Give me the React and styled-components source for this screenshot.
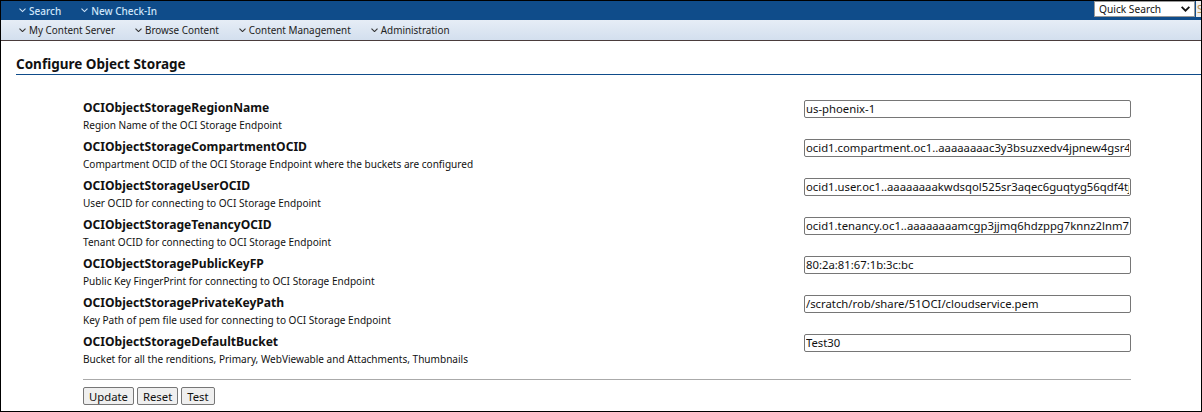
import styled, { createGlobalStyle } from "styled-components";

const GlobalStyle = createGlobalStyle`
  html, body {
    margin: 0;
    padding: 0;
    background: #fff;
  }
`;

const Page = styled.div`
  width: 1202px;
  height: 412px;
  box-sizing: border-box;
  border: 1px solid #000;
  overflow: hidden;
  font-family: "Noto Sans", "Liberation Sans", sans-serif;
  color: #111;
`;

const TopBar = styled.div`
  height: 19px;
  background: #0f4c8a;
  display: flex;
  align-items: center;
  padding-left: 18px;
  gap: 20px;
`;

const TopLink = styled.a`
  display: flex;
  align-items: center;
  gap: 3px;
  color: #cfe6fa;
  font-size: 10px;
  font-weight: 500;
`;

const QuickArea = styled.div`
  margin-left: auto;
  display: flex;
  height: 16px;
  align-self: flex-start;
  gap: 1px;
`;

const QuickSelect = styled.div`
  width: 101px;
  box-sizing: border-box;
  border: 1px solid #999;
  background: #fff;
  display: flex;
  align-items: center;
  justify-content: space-between;
  padding: 0 4px;
  font-size: 10.2px;
  color: #111;
`;

const QuickInput = styled.div`
  width: 5px;
  overflow: hidden;
  box-sizing: border-box;
  background: #eee;
  font-size: 11px;
  line-height: 16px;
  color: #b08a50;
  padding-left: 1px;
`;

const SubBar = styled.div`
  height: 20px;
  background: linear-gradient(#e6edf6, #d3dfee);
  border-bottom: 1px solid #4a3c3c;
  display: flex;
  align-items: center;
  padding-left: 18px;
  gap: 20px;
`;

const SubLink = styled.a`
  display: flex;
  align-items: center;
  gap: 3px;
  font-size: 9.9px;
  color: #222;
`;

const Heading = styled.h1`
  margin: 15px 0 0 15px;
  padding-bottom: 2px;
  height: 16px;
  line-height: 16px;
  border-bottom: 1px solid #0f4c8a;
  font-size: 13.5px;
  font-weight: 700;
  color: #111;
`;

const Form = styled.div`
  margin: 25px 70px 0 82px;
`;

const Row = styled.div`
  height: 39px;
  display: flex;
  justify-content: space-between;
`;

const Label = styled.div`
  font-size: 12.1px;
  font-weight: 700;
  line-height: 16px;
`;

const Desc = styled.div`
  font-size: 10.05px;
  line-height: 14px;
  margin-top: 2px;
`;

const Field = styled.input`
  width: 327px;
  height: 18px;
  box-sizing: border-box;
  border: 1px solid #767676;
  border-radius: 2px;
  padding: 0 1px 1px;
  outline: none;
  font-family: "Noto Sans", sans-serif;
  font-size: 11.3px;
  color: #111;
`;

const Footer = styled.div`
  border-top: 1px solid #aaa;
  margin-top: 6px;
  padding-top: 7px;
  display: flex;
  gap: 3px;
`;

const Button = styled.button`
  height: 18px;
  padding: 0 5px;
  box-sizing: border-box;
  border: 1px solid #767676;
  border-radius: 2px;
  background: #efefef;
  font-family: "Noto Sans", sans-serif;
  font-size: 11.3px;
  color: #111;
`;

const Chevron = ({ color = "#333", size = 7, weight = 1.1 }) => (
  <svg width={size} height={size * 0.6} viewBox="0 0 7 4" fill="none">
    <path d="M0.5 0.5L3.5 3.5L6.5 0.5" stroke={color} strokeWidth={weight} />
  </svg>
);

const fields = [
  ["OCIObjectStorageRegionName", "Region Name of the OCI Storage Endpoint", "us-phoenix-1"],
  ["OCIObjectStorageCompartmentOCID", "Compartment OCID of the OCI Storage Endpoint where the buckets are configured", "ocid1.compartment.oc1..aaaaaaaac3y3bsuzxedv4jpnew4gsr4qa"],
  ["OCIObjectStorageUserOCID", "User OCID for connecting to OCI Storage Endpoint", "ocid1.user.oc1..aaaaaaaakwdsqol525sr3aqec6guqtyg56qdf4tjqa"],
  ["OCIObjectStorageTenancyOCID", "Tenant OCID for connecting to OCI Storage Endpoint", "ocid1.tenancy.oc1..aaaaaaaamcgp3jjmq6hdzppg7knnz2lnm7vqa"],
  ["OCIObjectStoragePublicKeyFP", "Public Key FingerPrint for connecting to OCI Storage Endpoint", "80:2a:81:67:1b:3c:bc"],
  ["OCIObjectStoragePrivateKeyPath", "Key Path of pem file used for connecting to OCI Storage Endpoint", "/scratch/rob/share/51OCI/cloudservice.pem"],
  ["OCIObjectStorageDefaultBucket", "Bucket for all the renditions, Primary, WebViewable and Attachments, Thumbnails", "Test30"],
];

const App = () => (
  <Page>
    <GlobalStyle />
    <TopBar>
      <TopLink><Chevron color="#cfe6fa" />Search</TopLink>
      <TopLink><Chevron color="#cfe6fa" />New Check-In</TopLink>
      <QuickArea>
        <QuickSelect>
          Quick Search
          <Chevron color="#111" size={9} weight={1.4} />
        </QuickSelect>
        <QuickInput>S</QuickInput>
      </QuickArea>
    </TopBar>
    <SubBar>
      <SubLink><Chevron />My Content Server</SubLink>
      <SubLink><Chevron />Browse Content</SubLink>
      <SubLink><Chevron />Content Management</SubLink>
      <SubLink><Chevron />Administration</SubLink>
    </SubBar>
    <Heading>Configure Object Storage</Heading>
    <Form>
      {fields.map(([name, desc, value]) => (
        <Row key={name}>
          <div>
            <Label>{name}</Label>
            <Desc>{desc}</Desc>
          </div>
          <Field defaultValue={value} />
        </Row>
      ))}
      <Footer>
        <Button>Update</Button>
        <Button>Reset</Button>
        <Button>Test</Button>
      </Footer>
    </Form>
  </Page>
);

export default App;
